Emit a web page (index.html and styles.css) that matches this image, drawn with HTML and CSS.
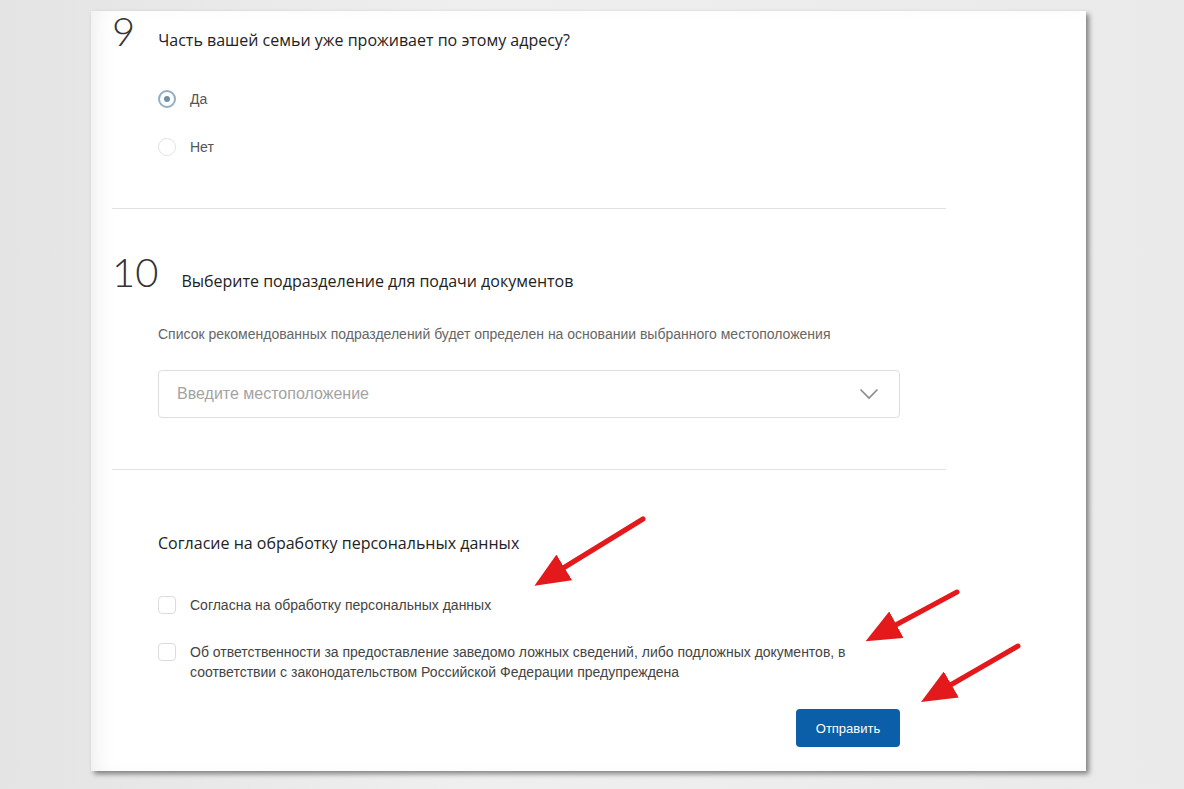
FILE: index.html
```html
<html lang="ru">
<head>
    <meta charset="UTF-8">
    <meta name="viewport" content="width=device-width, initial-scale=1.0">
    <link rel="stylesheet" href="styles.css">
    <title>Заявление</title>
</head>
<body>

    <div class="card">

        <section class="step step-first">
            <div class="step-head">
                <span class="step-num">9</span>
                <h2 class="step-title">Часть вашей семьи уже проживает по этому адресу?</h2>
            </div>
            <div class="step-body">
                <label class="radio-row">
                    <span class="radio checked"></span>
                    <span class="radio-label">Да</span>
                </label>
                <label class="radio-row">
                    <span class="radio"></span>
                    <span class="radio-label">Нет</span>
                </label>
            </div>
        </section>

        <section class="step step-second">
            <div class="step-head">
                <span class="step-num">10</span>
                <h2 class="step-title">Выберите подразделение для подачи документов</h2>
            </div>
            <div class="step-body">
                <p class="hint">Список рекомендованных подразделений будет определен на основании выбранного местоположения</p>
                <div class="select">
                    <span class="select-placeholder">Введите местоположение</span>
                    <svg class="chevron" width="20" height="12" viewBox="0 0 20 12">
                        <polyline points="1.5,1.5 10,10 18.5,1.5" fill="none" stroke="#8a8a8a" stroke-width="1.6"/>
                    </svg>
                </div>
            </div>
        </section>

        <section class="step step-last">
            <div class="step-body">
                <h3 class="consent-title">Согласие на обработку персональных данных</h3>
                <label class="check-row">
                    <span class="checkbox"></span>
                    <span class="check-label">Согласна на обработку персональных данных</span>
                </label>
                <label class="check-row">
                    <span class="checkbox"></span>
                    <span class="check-label">Об ответственности за предоставление заведомо ложных сведений, либо подложных документов, в соответствии с законодательством Российской Федерации предупреждена</span>
                </label>
                <div class="actions">
                    <button type="button" class="submit-btn">Отправить</button>
                </div>
            </div>
        </section>

    </div>

    <!-- стрелки поверх формы -->
    <svg class="arrows" width="1184" height="789" viewBox="0 0 1184 789">
        <defs>
            <marker id="head" markerWidth="7" markerHeight="6" refX="1" refY="3" orient="auto" markerUnits="strokeWidth">
                <polygon points="0,0 7,3 0,6" fill="#e3191b"/>
            </marker>
        </defs>
        <line x1="643" y1="519" x2="560" y2="570" stroke="#e3191b" stroke-width="5" stroke-linecap="round" marker-end="url(#head)"/>
        <line x1="957" y1="592" x2="892" y2="627" stroke="#e3191b" stroke-width="5" stroke-linecap="round" marker-end="url(#head)"/>
        <line x1="1018" y1="646" x2="947" y2="687" stroke="#e3191b" stroke-width="5" stroke-linecap="round" marker-end="url(#head)"/>
    </svg>

</body>
</html>
```

FILE: styles.css
```css
body {
    margin: 0;
    height: 789px;
    overflow: hidden;
    background: linear-gradient(90deg, #e4e4e4 0%, #efefef 40%, #eaeaea 100%);
    font-family: "Liberation Sans", Arial, sans-serif;
}

.card {
    position: relative;
    box-sizing: border-box;
    width: 995px;
    height: 760px;
    margin: 11px 0 0 91px;
    padding: 0 0 0 21px;
    background: #fff;
    box-shadow: 3px 3px 5px rgba(0, 0, 0, 0.45), inset 14px 0 30px -20px rgba(0, 0, 0, 0.15);
}

.step {
    width: 834px;
    border-bottom: 1px solid #e2e2e2;
}

.step-last {
    border-bottom: none;
}

.step-head {
    display: flex;
    align-items: baseline;
    gap: 23px;
}

.step-num {
    font-family: Lato, "Open Sans", sans-serif;
    font-weight: 300;
    font-size: 40px;
    line-height: 40px;
    color: #333;
}

.step-title {
    margin: 0;
    font-family: "Open Sans", sans-serif;
    font-weight: 400;
    font-size: 16px;
    color: #222;
}

.step-body {
    padding: 0 46px;
}

/* шаг 9 */
.step-first {
    height: 197px;
}

.step-first .step-body {
    padding-top: 24px;
}

.radio-row {
    display: flex;
    align-items: center;
    height: 48px;
}

.radio {
    box-sizing: border-box;
    width: 18px;
    height: 18px;
    border-radius: 50%;
    border: 1px solid #e3e3e3;
    margin-right: 14px;
    position: relative;
}

.radio.checked {
    border: 2px solid #8fb0c2;
}

.radio.checked::after {
    content: "";
    position: absolute;
    top: 4px;
    left: 4px;
    width: 6px;
    height: 6px;
    border-radius: 50%;
    background: #6f8fa0;
}

.radio-label {
    font-size: 14px;
    color: #555;
}

/* шаг 10 */
.step-second {
    height: 261px;
    padding-top: 43px;
    box-sizing: border-box;
}

.hint {
    margin: 34px 0 0;
    font-size: 14px;
    line-height: 16px;
    color: #666;
}

.select {
    box-sizing: border-box;
    display: flex;
    align-items: center;
    justify-content: space-between;
    height: 48px;
    margin-top: 28px;
    padding: 0 20px 0 18px;
    border: 1px solid #dedede;
    border-radius: 4px;
}

.select-placeholder {
    font-size: 16px;
    color: #a3a3a3;
}

.chevron {
    display: block;
}

/* согласие */
.step-last {
    padding-top: 63px;
}

.consent-title {
    margin: 0 0 43px;
    font-family: "Open Sans", sans-serif;
    font-weight: 400;
    font-size: 16px;
    line-height: 20px;
    color: #222;
}

.check-row {
    display: flex;
    align-items: flex-start;
    margin-bottom: 28px;
}

.checkbox {
    box-sizing: border-box;
    flex: none;
    width: 18px;
    height: 18px;
    border: 1px solid #dcdcdc;
    border-radius: 4px;
    margin-right: 14px;
}

.check-label {
    font-size: 14px;
    line-height: 20px;
    color: #444;
    margin-top: -1px;
}

.actions {
    display: flex;
    justify-content: flex-end;
    margin-top: -1px;
}

.submit-btn {
    width: 104px;
    height: 38px;
    border: none;
    border-radius: 4px;
    background-color: #0b5fa8;
    color: #fff;
    font-family: "Liberation Sans", Arial, sans-serif;
    font-size: 13px;
    cursor: pointer;
}

.arrows {
    position: absolute;
    top: 0;
    left: 0;
    pointer-events: none;
}
```
